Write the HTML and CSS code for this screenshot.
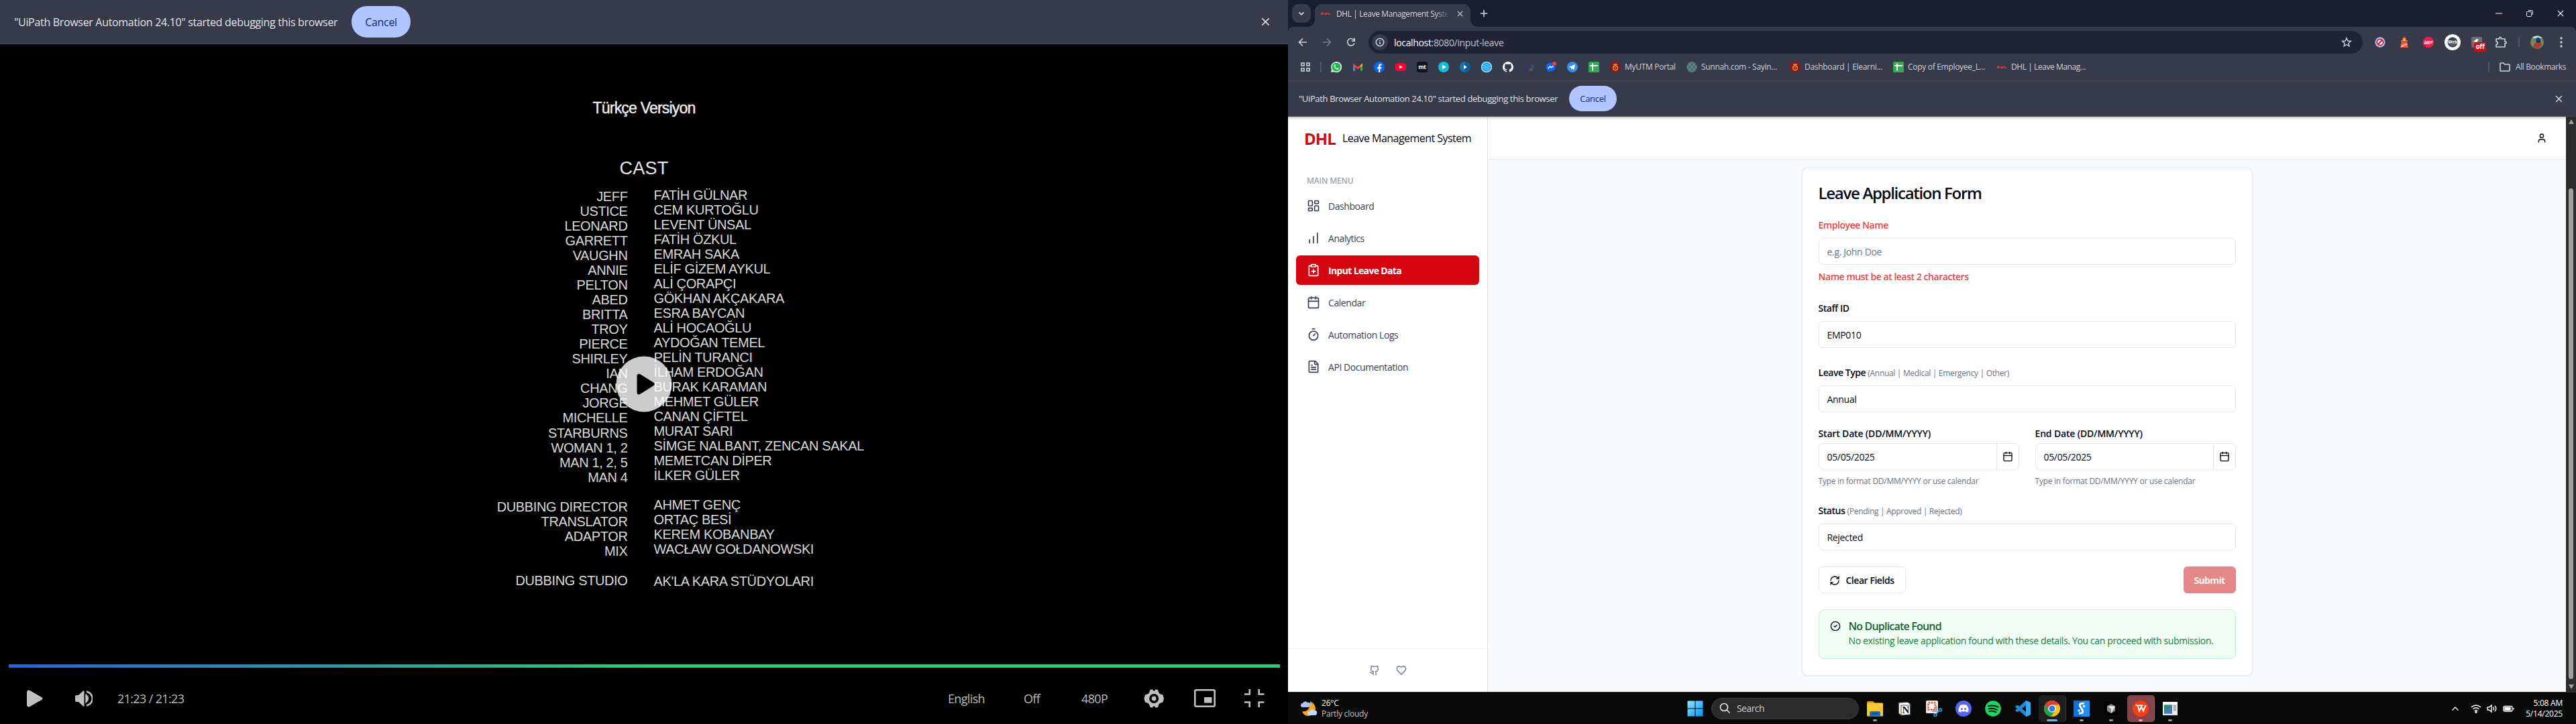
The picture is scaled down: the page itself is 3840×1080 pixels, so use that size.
FILE: index.html
```html
<!DOCTYPE html>
<html lang="en">
<head>
<meta charset="utf-8">
<title>DHL | Leave Management System</title>
<link rel="stylesheet" href="styles.css">
</head>
<body>
<svg width="0" height="0" class="defs">
  <symbol id="x" viewBox="0 0 12 12"><path d="M1.2 1.2l9.6 9.6M10.8 1.2l-9.6 9.6"/></symbol>
  <symbol id="cal" viewBox="0 0 24 24"><path d="M8 2v4M16 2v4M3 10h18"/><rect x="3" y="4" width="18" height="18" rx="2"/></symbol>
  <symbol id="sheet" viewBox="0 0 16 16"><rect width="16" height="16" rx="1.5" fill="#34a853"/><path d="M6 2.5v11M2 6h12" stroke="#fff" stroke-width="2" fill="none"/></symbol>
  <symbol id="utm" viewBox="0 0 16 16"><circle cx="8" cy="8" r="8" fill="#8c1420"/><circle cx="8" cy="9.3" r="3.4" fill="none" stroke="#e9a41f" stroke-width="1.5"/><path d="M5 4h6" stroke="#e9a41f" stroke-width="1.5"/><circle cx="8" cy="9.3" r="1" fill="#e9a41f"/></symbol>
  <symbol id="dhl" viewBox="0 0 16 16"><path d="M.5 10l1-3.6h3.2q1.4.8.2 2.2-.7 1.4-2.2 1.4zM6 10l1-3.6h1.2L7.8 8h1.5l.4-1.6h1.4L10 10zM11.2 10l1-3.6h1.3l-.7 2.6h2.9l-.3 1z" fill="#e2392f"/></symbol>
</svg>

<div class="desktop">
<section class="player">
  <div class="infobar infobar-lg">
    <span class="info-text">"UiPath Browser Automation 24.10" started debugging this browser</span>
    <button class="pill">Cancel</button>
    <svg class="close" width="13" height="13"><use href="#x"/></svg>
  </div>
  <div class="video">
    <div class="version">Türkçe Versiyon</div>
    <div class="cast-title">CAST</div>
    <div class="credits">
      <div class="roles">JEFF<br>USTICE<br>LEONARD<br>GARRETT<br>VAUGHN<br>ANNIE<br>PELTON<br>ABED<br>BRITTA<br>TROY<br>PIERCE<br>SHIRLEY<br>IAN<br>CHANG<br>JORGE<br>MICHELLE<br>STARBURNS<br>WOMAN 1, 2<br>MAN 1, 2, 5<br>MAN 4<br><br>DUBBING DIRECTOR<br>TRANSLATOR<br>ADAPTOR<br>MIX<br><br>DUBBING STUDIO</div>
      <div class="names">FATİH GÜLNAR<br>CEM KURTOĞLU<br>LEVENT ÜNSAL<br>FATİH ÖZKUL<br>EMRAH SAKA<br>ELİF GİZEM AYKUL<br>ALİ ÇORAPÇI<br>GÖKHAN AKÇAKARA<br>ESRA BAYCAN<br>ALİ HOCAOĞLU<br>AYDOĞAN TEMEL<br>PELİN TURANCI<br>İLHAM ERDOĞAN<br>BURAK KARAMAN<br>MEHMET GÜLER<br>CANAN ÇİFTEL<br>MURAT SARI<br>SİMGE NALBANT, ZENCAN SAKAL<br>MEMETCAN DİPER<br>İLKER GÜLER<br><br>AHMET GENÇ<br>ORTAÇ BESİ<br>KEREM KOBANBAY<br>WACŁAW GOŁDANOWSKI<br><span class="studio">AK'LA KARA STÜDYOLARI</span></div>
    </div>
    <svg class="big-play" viewBox="0 0 84 84"><circle cx="42" cy="42" r="41.5" fill="#fff" fill-opacity=".8"/><path d="M31.5 30q0-4.5 4.5-3l20 12.500q3.500 2.500 0 5L36 57q-4.500 1.500-4.500-3z" fill="#000"/></svg>
  </div>
  <div class="progress"></div>
  <div class="controls">
    <svg class="c-play" width="24" height="26" viewBox="0 0 24 26"><path d="M0 3.500Q.5-.8 4.500 1L22 11q3 2 0 4L4.500 25Q.5 26.800 0 22.500z"/></svg>
    <svg class="c-vol" width="26" height="24" viewBox="0 0 26 24"><path d="M0 9q0-2 2-2h3l7-6.500q1.500-1 1.500 1v21q0 2-1.500 1L5 17H2q-2 0-2-2z"/><path d="M16.500 7.200q5 4.800 0 9.600zM17 1.500c11.500 3.500 11.500 17.500 0 21" fill="none" stroke="#bfbfbf" stroke-width="2.400"/></svg>
    <span class="time">21:23 / 21:23</span>
    <span class="opt lang">English</span><span class="opt sub">Off</span><span class="opt res">480P</span>
    <svg class="c-gear" width="30" height="28" viewBox="0 0 30 28"><path fill-rule="evenodd" d="M9.500 1 13 .3l1.200 2.200h2L17.500.3 21 1l1.500 4.500 1.500 1.500 4.500 1.500L30 14l-1.500 5.500L24 21l-1.500 1.500L21 27l-3.500.7-1.300-2.200h-2L13 27.700 9.500 27 8 22.500 6.500 21 2 19.500.5 14 2 8.500 6.500 7 8 5.500zM15.200 7a7 7 0 100 14 7 7 0 000-14z"/><circle cx="15.200" cy="14" r="3.400"/></svg>
    <svg class="c-pip" width="32" height="27" viewBox="0 0 32 27"><rect x="1.300" y="1.300" width="29.400" height="24.400" rx="2" fill="none" stroke="#bfbfbf" stroke-width="2.600"/><rect x="15" y="12" width="11.500" height="8.500"/></svg>
    <svg class="c-fs" width="30" height="27" viewBox="0 0 30 27"><path d="M0 7.500h7.800V0M29.500 7.500h-7.800V0M0 19.500h7.800V27M29.500 19.500h-7.800V27" fill="none" stroke="#bfbfbf" stroke-width="2.700"/></svg>
  </div>
</section>

<section class="chrome">
  <header class="tabs">
    <div class="tab-search"><svg width="10" height="10" viewBox="0 0 10 10"><path d="M1.500 3.300 5 6.800l3.500-3.500" stroke-width="1.800"/></svg></div>
    <div class="tab">
      <svg class="fill" width="16" height="16"><use href="#dhl"/></svg>
      <span class="tab-title">DHL | Leave Management Syste</span>
      <svg width="9" height="9"><use href="#x"/></svg>
    </div>
    <svg class="plus" width="12" height="12" viewBox="0 0 12 12"><path d="M6 .8v10.400M.8 6h10.400"/></svg>
    <div class="win">
      <svg width="10" height="10" viewBox="0 0 10 10"><path d="M0 5h10" stroke-width="1"/></svg>
      <svg width="10" height="10" viewBox="0 0 10 10"><rect x=".5" y="2.500" width="7" height="7" rx="1" stroke-width="1"/><path d="M3 .5h4.500a2 2 0 012 2V7" stroke-width="1"/></svg>
      <svg width="10" height="10"><use href="#x"/></svg>
    </div>
  </header>
  <nav class="toolbar">
    <svg width="16" height="16" viewBox="0 0 16 16"><path d="M14 8H3M8 2.500 2.500 8 8 13.500"/></svg>
    <svg class="dim" width="16" height="16" viewBox="0 0 16 16"><path d="M2 8h11M8 2.500 13.500 8 8 13.500"/></svg>
    <svg width="16" height="16" viewBox="0 0 16 16"><path d="M13 9.500A5.300 5.300 0 1 1 12.500 5M13.200 1.800v4.400H8.800"/></svg>
    <div class="omnibox">
      <span class="site"><svg width="14" height="14" viewBox="0 0 14 14"><circle cx="7" cy="7" r="5.700"/><path d="M7 6.300v3.800M7 3.800v1.300"/></svg></span>
      <span class="url"><b>localhost</b>:8080/input-leave</span>
      <svg class="star" width="16" height="16" viewBox="0 0 16 16"><path d="M8 1.800 9.800 6l4.500.4-3.400 3 1 4.500L8 11.500l-3.900 2.400 1-4.500-3.400-3L6.200 6z" stroke-width="1.400"/></svg>
    </div>
    <div class="exts">
      <svg class="fill" width="16" height="16" viewBox="0 0 16 16"><circle cx="8" cy="8" r="7.300" fill="#fff" stroke="#4a90f0" stroke-width="1.200"/><circle cx="8" cy="8" r="4.800" fill="none" stroke="#d0142c" stroke-width="2"/><path d="M4.500 11.500l7-7" stroke="#d0142c" stroke-width="2"/></svg>
      <svg class="fill" width="16" height="16" viewBox="0 0 16 16"><path d="M5 2.500 8 0l3 2.500V5h2v2.500H3V5h2zM4 8h8l2 8H2z" fill="#ef5b3c"/><circle cx="8" cy="4.500" r="1.800" fill="#ffd22e"/><path d="M3.500 13l8.500-3.500.5 2L3 15.500z" fill="#ffc1a6"/></svg>
      <svg class="fill" width="16" height="16" viewBox="0 0 16 16"><path d="M4.700 0h6.600L16 4.700v6.600L11.300 16H4.700L0 11.300V4.700z" fill="#ed1e45"/><text x="8" y="10.600" class="abp">ABP</text></svg>
      <svg class="fill" width="24" height="24" viewBox="0 0 24 24"><circle cx="12" cy="12" r="12" fill="#fff"/><circle cx="12" cy="12" r="7.500" fill="#2f4157"/><text x="12" y="13.500" class="abp">Web</text><path d="M8 16h8" stroke="#7d95a8" stroke-width="1"/></svg>
      <span class="ext-off"><svg class="fill" width="16" height="16" viewBox="0 0 16 16"><rect width="16" height="16" rx="2" fill="#6d6d6d"/><path d="M3 7l5-4 3 1-3 4z" fill="#fff"/></svg><em>off</em></span>
      <svg width="18" height="18" viewBox="0 0 18 18"><path d="M2 4h4.500V3a1.500 1.500 0 013 0v1H15v4h.8a1.400 1.400 0 010 2.800H15V16H2v-3.500c3-.3 3-4.300 0-4.600z"/></svg>
      <i class="bar"></i>
      <svg class="fill" width="20" height="20" viewBox="0 0 20 20"><circle cx="10" cy="10" r="10" fill="#6f8a55"/><path d="M2.500 4a10 10 0 0115 0z" fill="#c4d8e6"/><path d="M4.500 18q0-8 7-8 5 0 5.500 5a10 10 0 01-12.500 3z" fill="#b03a3a"/><circle cx="11.500" cy="6.500" r="3.500" fill="#223c78"/><path d="M9 8h6v2.500H9z" fill="#20222c"/></svg>
      <svg class="dots" width="4" height="16" viewBox="0 0 4 16"><circle cx="2" cy="2" r="1.700"/><circle cx="2" cy="8" r="1.700"/><circle cx="2" cy="14" r="1.700"/></svg>
    </div>
  </nav>
  <nav class="bookmarks">
    <svg width="14" height="14" viewBox="0 0 14 14"><path d="M1 1h4v4H1zM9 1h4v4H9zM1 9h4v4H1zM9 9h4v4H9z"/></svg>
    <i class="bar"></i>
    <div class="marks">
      <svg width="16" height="16" viewBox="0 0 16 16"><path d="M0 16l1.200-4A8 8 0 1 1 4 14.900z" fill="#fff"/><circle cx="8" cy="8" r="6.600" fill="#12c143"/><path d="M5.500 4q-1.500 1-1 2.800 1.300 4 5 5 1.700.2 2.300-1.500L9.900 9l-1 1Q7 9.500 6 7.300l.8-1L6.300 4z" fill="#fff"/></svg>
      <svg width="16" height="16" viewBox="0 0 16 16"><path d="M1 14V4l3 2v8z" fill="#4285f4"/><path d="M12 14V6l3-2v10z" fill="#34a853"/><path d="M1 2.500 8 8l7-5.500V6l-7 5.500L1 6z" fill="#ea4335"/><path d="M12 5.500l3-3V6l-3 2.300z" fill="#fbbc04"/></svg>
      <svg width="16" height="16" viewBox="0 0 16 16"><circle cx="8" cy="8" r="8" fill="#0866ff"/><path d="M7 16v-5.500H5V8h2V6.500Q7 3.200 10 3.200h1.500v2.300h-1q-1.300 0-1.300 1.300V8h2.200l-.4 2.500H9.200V16z" fill="#fff"/></svg>
      <svg width="16" height="16" viewBox="0 0 16 16"><rect y="2.300" width="16" height="11.400" rx="3" fill="#ff0033"/><path d="M6.300 5.500v5L10.800 8z" fill="#fff"/></svg>
      <svg width="16" height="16" viewBox="0 0 16 16"><rect width="16" height="16" rx="2.500" fill="#10131c"/><text x="8" y="11" class="mt">mt</text></svg>
      <svg width="16" height="16" viewBox="0 0 16 16"><circle cx="8" cy="8" r="8" fill="#0cc0d8"/><path d="M6 4.500v7L12 8z" fill="#fff"/></svg>
      <svg width="16" height="16" viewBox="0 0 16 16"><circle cx="8" cy="8" r="8" fill="#0b5c95"/><path d="M8 0a8 8 0 000 16z" fill="#1078a8"/><path d="M6 5v6l5-3z" fill="#fff"/></svg>
      <svg width="16" height="16" viewBox="0 0 16 16"><circle cx="8" cy="8" r="7.500" fill="#19a4f5" stroke="#9cdcfa"/><path d="M3 5l10 6M2.500 8l9 5.500M6 3l7.500 4.500" stroke="#7ccbf7" stroke-width="1.200"/></svg>
      <svg width="16" height="16" viewBox="0 0 16 16"><path d="M8 0a8 8 0 00-2.500 15.600c.4 0 .5-.2.500-.4v-1.500c-2.200.5-2.700-1-2.700-1-.4-.9-.9-1.100-.9-1.100-.7-.5 0-.5 0-.5.800 0 1.200.8 1.200.8.700 1.300 1.900.9 2.400.7 0-.5.200-.9.500-1.100-1.800-.2-3.600-.9-3.600-4 0-.8.300-1.500.8-2.100 0-.2-.4-1 .1-2.100 0 0 .7-.2 2.200.8a7.600 7.600 0 014 0c1.500-1 2.200-.8 2.200-.8.400 1.100.1 1.900.1 2.100.5.600.8 1.300.8 2.100 0 3.100-1.900 3.800-3.700 4 .3.300.6.800.6 1.500v2.200c0 .2.100.4.500.4A8 8 0 008 0z" fill="#fff"/></svg>
      <svg width="16" height="16" viewBox="0 0 16 16"><path d="M6 2h4L5 14H0z" fill="#3a3068"/><path d="M9 2l6 4v5l-4-2z" fill="#36506a"/><path d="M9 9l5 2-2 3H7z" fill="#55564a"/></svg>
      <svg width="16" height="16" viewBox="0 0 16 16"><path d="M7.500 1.500C3 1.500.5 4.500.5 8c0 2.200 1 4 2.500 5v2.500l2.300-1.200c4.700 1.200 9.200-1.800 9.200-6.300 0-3.500-2.500-6.500-7-6.500z" fill="#0866ff"/><path d="M3.500 10.500 6.500 7l2 1.700 3-2.200" stroke="#fff" stroke-width="1.500" fill="none"/><circle cx="13" cy="3" r="3" fill="#f0402f"/></svg>
      <svg width="16" height="16" viewBox="0 0 16 16"><circle cx="8" cy="8" r="8" fill="#3390ec"/><path d="M2.800 8l9.200-4-1.600 8.300-3-2-1.300 1.300L5.800 9z" fill="#fff"/></svg>
      <svg width="16" height="16"><use href="#sheet"/></svg>
    </div>
    <span class="bm b1"><svg width="16" height="16"><use href="#utm"/></svg>MyUTM Portal</span>
    <span class="bm b2"><svg width="16" height="16" viewBox="0 0 16 16"><circle cx="8" cy="8" r="8" fill="#49696e"/><path d="M3 2l10 12M8 0l7 9M1 7l7 9M13 2L3 14M8 0L1 9M15 7l-7 9" stroke="#72979a" stroke-width="1" fill="none"/></svg>Sunnah.com - Sayin...</span>
    <span class="bm b3"><svg width="16" height="16"><use href="#utm"/></svg>Dashboard | Elearni...</span>
    <span class="bm b4"><svg width="16" height="16"><use href="#sheet"/></svg>Copy of Employee_L...</span>
    <span class="bm b5"><svg width="16" height="16"><use href="#dhl"/></svg>DHL | Leave Manag...</span>
    <div class="all"><i class="bar"></i><svg width="16" height="14" viewBox="0 0 16 14"><path d="M1 2.200Q1 1 2.200 1h3.600l1.700 2h6.300q1.200 0 1.200 1.200v7.600q0 1.200-1.200 1.200H2.200Q1 13 1 11.800z"/></svg>All Bookmarks</div>
  </nav>
  <div class="infobar">
    <span class="info-text">"UiPath Browser Automation 24.10" started debugging this browser</span>
    <button class="pill">Cancel</button>
    <svg class="close" width="11" height="11"><use href="#x"/></svg>
  </div>

  <div class="page">
    <aside class="sidebar">
      <div class="brand"><strong>DHL</strong><span>Leave Management System</span></div>
      <div class="menu-label">MAIN MENU</div>
      <nav class="menu">
        <a><svg class="l" viewBox="0 0 24 24"><rect x="3" y="3" width="7" height="9" rx="1"/><rect x="14" y="3" width="7" height="5" rx="1"/><rect x="14" y="12" width="7" height="9" rx="1"/><rect x="3" y="16" width="7" height="5" rx="1"/></svg>Dashboard</a>
        <a><svg class="l" viewBox="0 0 24 24"><path d="M5 21v-6M12 21V9M19 21V3"/></svg>Analytics</a>
        <a class="active"><svg class="l" viewBox="0 0 24 24"><rect x="8" y="2" width="8" height="4" rx="1"/><path d="M16 4h2a2 2 0 012 2v14a2 2 0 01-2 2H6a2 2 0 01-2-2V6a2 2 0 012-2h2M9 14h6M12 17v-6"/></svg>Input Leave Data</a>
        <a><svg class="l"><use href="#cal"/></svg>Calendar</a>
        <a><svg class="l" viewBox="0 0 24 24"><path d="M10 2h4M12 14l3-3"/><circle cx="12" cy="14" r="8"/></svg>Automation Logs</a>
        <a><svg class="l" viewBox="0 0 24 24"><path d="M15 2H6a2 2 0 00-2 2v16a2 2 0 002 2h12a2 2 0 002-2V7zM14 2v4a2 2 0 002 2h4M10 9H8M16 13H8M16 17H8"/></svg>API Documentation</a>
      </nav>
      <div class="side-foot">
        <svg class="l" viewBox="0 0 24 24"><path d="M15 22v-4a4.800 4.800 0 00-1-3.500c3 0 6-2 6-5.500.08-1.250-.27-2.480-1-3.500.28-1.150.28-2.350 0-3.500 0 0-1 0-3 1.500-2.640-.5-5.360-.5-8 0C6 2 5 2 5 2c-.3 1.150-.3 2.350 0 3.500A5.400 5.400 0 004 9c0 3.500 3 5.500 6 5.500-.39.490-.68 1.050-.85 1.650-.17.6-.22 1.230-.15 1.850v4M9 18c-4.510 2-5-2-7-2"/></svg>
        <svg class="l" viewBox="0 0 24 24"><path d="M19 14c1.490-1.460 3-3.210 3-5.500A5.500 5.500 0 0016.500 3c-1.760 0-3 .5-4.500 2-1.500-1.500-2.740-2-4.500-2A5.500 5.500 0 002 8.500c0 2.300 1.500 4.050 3 5.500l7 7z"/></svg>
      </div>
    </aside>
    <main class="main">
      <div class="topbar"><svg class="l" viewBox="0 0 24 24"><path d="M19 21v-2a4 4 0 00-4-4H9a4 4 0 00-4 4v2"/><circle cx="12" cy="7" r="4"/></svg></div>
      <form class="card">
        <h1>Leave Application Form</h1>
        <div class="field error"><label>Employee Name</label><div class="input placeholder">e.g. John Doe</div><p>Name must be at least 2 characters</p></div>
        <div class="field"><label>Staff ID</label><div class="input">EMP010</div></div>
        <div class="field"><label>Leave Type <small>(Annual | Medical | Emergency | Other)</small></label><div class="input">Annual</div></div>
        <div class="dates">
          <div class="date"><label>Start Date (DD/MM/YYYY)</label><div class="input"><span>05/05/2025</span><i><svg class="l"><use href="#cal"/></svg></i></div><p>Type in format DD/MM/YYYY or use calendar</p></div>
          <div class="date"><label>End Date (DD/MM/YYYY)</label><div class="input"><span>05/05/2025</span><i><svg class="l"><use href="#cal"/></svg></i></div><p>Type in format DD/MM/YYYY or use calendar</p></div>
        </div>
        <div class="field"><label>Status <small>(Pending | Approved | Rejected)</small></label><div class="input">Rejected</div></div>
        <div class="actions">
          <button type="button" class="btn"><svg class="l" viewBox="0 0 24 24"><path d="M3 12a9 9 0 019-9 9.750 9.750 0 016.740 2.740L21 8M21 3v5h-5M21 12a9 9 0 01-9 9 9.750 9.750 0 01-6.740-2.740L3 16M8 16H3v5"/></svg>Clear Fields</button>
          <button type="button" class="btn submit">Submit</button>
        </div>
        <div class="alert">
          <svg class="l" viewBox="0 0 24 24"><circle cx="12" cy="12" r="10"/><path d="M9 12l2 2 4-4"/></svg>
          <div><h2>No Duplicate Found</h2><p>No existing leave application found with these details. You can proceed with submission.</p></div>
        </div>
      </form>
    </main>
    <div class="scroll"><b class="up"></b><b class="thumb"></b><b class="down"></b></div>
  </div>

  <footer class="taskbar">
    <div class="weather">
      <svg width="25" height="24" viewBox="0 0 25 24"><path d="M14 1q9 5 8 13-3 9-12 9-6-1-8-7 12 2 12-15z" fill="#f5a623"/><path d="M3 10a3 3 0 010-6 4 4 0 017-1 3 3 0 014 4q0 3-3 3z" fill="#a9c6f7"/><path d="M13 22a3 3 0 010-6 4 4 0 017-1 3 3 0 014 4q0 3-3 3z" fill="#c3d8fb"/></svg>
      <div><span>26°C</span><em>Partly cloudy</em></div>
    </div>
    <div class="slot"><svg width="24" height="24" viewBox="0 0 24 24"><defs><linearGradient id="w" x2="1" y2="1"><stop stop-color="#8be4ff"/><stop offset="1" stop-color="#0a93f5"/></linearGradient></defs><path d="M.5.5h11v11H.5zM12.500.5h11v11h-11zM.5 12.500h11v11H.5zM12.500 12.500h11v11h-11z" fill="url(#w)"/></svg></div>
    <div class="search"><svg width="17" height="17" viewBox="0 0 17 17"><circle cx="7" cy="7" r="5.500"/><path d="M11 11l4.500 4.500"/></svg>Search</div>
    <div class="slot run"><svg width="24" height="24" viewBox="0 0 24 24"><path d="M0 3q0-2 2-2h7l3 3H0z" fill="#d99510"/><rect y="3.500" width="24" height="20" rx="1.500" fill="#fcc936"/><path d="M4 23.500V18q0-2 2-2h12q2 0 2 2v5.500z" fill="#1373c8"/><path d="M7 19.500h10" stroke="#0b4e94" stroke-width="2"/></svg></div>
    <div class="slot"><svg width="24" height="24" viewBox="0 0 24 24"><path d="M3 3l14-1 4 3v16l-14 1.500L3 19z" fill="#fff" stroke="#2b2b2b"/><path d="M7 7h13.500v14L7 22z" fill="#fff" stroke="#222" stroke-width=".8"/><text x="13.700" y="19" class="notion">N</text></svg></div>
    <div class="slot"><svg width="24" height="24" viewBox="0 0 24 24"><rect width="18" height="19" rx="1.500" fill="#e9e9ec"/><rect x="3.500" y="3.500" width="10" height="10" fill="#fff" stroke="#d83b01" stroke-width="2" stroke-dasharray="2.500 1.500"/><path d="M14 8h3v9h-8v-3h5z" fill="#a4a7ad"/><circle cx="14" cy="21.500" r="2" fill="none" stroke="#2aa4e8" stroke-width="1.500"/><circle cx="21.500" cy="14" r="2" fill="none" stroke="#2aa4e8" stroke-width="1.500"/><path d="M15 20l5-5" stroke="#2aa4e8" stroke-width="1.500"/></svg></div>
    <div class="slot"><svg width="24" height="24" viewBox="0 0 24 24"><circle cx="12" cy="12" r="12" fill="#5865f2"/><path d="M7 7q5-2 10 0 3 4.500 2.500 9-2 1.500-3.500 1.500l-1-1.500q-3 .8-6 0l-1 1.500q-1.500 0-3.500-1.500Q4 11.500 7 7z" fill="#fff"/><circle cx="9.500" cy="12.500" r="1.600" fill="#5865f2"/><circle cx="14.500" cy="12.500" r="1.600" fill="#5865f2"/></svg></div>
    <div class="slot"><svg width="24" height="24" viewBox="0 0 24 24"><circle cx="12" cy="12" r="11.800" fill="#1ed760"/><path d="M5 8.200q7.500-2 14.500 1.500M5.700 12.300q6.300-1.600 12.300 1.500M6.500 16q5-1.200 10 1.300" stroke="#06140a" stroke-width="2" fill="none" stroke-linecap="round"/></svg></div>
    <div class="slot"><svg width="24" height="24" viewBox="0 0 24 24"><path d="M17 0l7 3v18l-7 3L1 9.500 3 7l3 .5 11 9.500V7L6 16.500l-3 .5-2-2.500z" fill="#1e8ad6"/><path d="M17 0l7 3v18l-7 3z" fill="#35a9f5"/></svg></div>
    <div class="slot run on"><svg width="24" height="24" viewBox="0 0 24 24"><circle cx="12" cy="12" r="12" fill="#fbc116"/><path d="M1.600 6A12 12 0 0122.400 6H12L7 15z" fill="#e33b2e"/><path d="M1.600 6A12 12 0 0010.500 24L16 15H7z" fill="#20a148"/><circle cx="12" cy="12" r="5.800" fill="#fff"/><circle cx="12" cy="12" r="4.500" fill="#2f7cf0"/></svg></div>
    <div class="slot run"><svg width="24" height="24" viewBox="0 0 24 24"><rect width="24" height="24" fill="#0a73dc"/><path d="M14 0h10v24H12z" fill="#2090f5"/><path d="M15.500 4.500q-7-1-6 3.500l4 7q1 4.500-5.500 4" stroke="#fff" stroke-width="3" fill="none"/><circle cx="15.500" cy="8.500" r="1.800" fill="#fff"/><circle cx="8" cy="15" r="1.800" fill="#fff"/></svg></div>
    <div class="slot run"><svg width="20" height="20" viewBox="0 0 20 20"><rect width="20" height="20" rx="4" fill="#000"/><path d="M10 3l6 3.500v7L10 17l-6-3.500v-7z" fill="#8a8a8a"/><path d="M4 6.500h12L10 17v-7z" fill="#eee"/></svg></div>
    <div class="slot run wps"><svg width="24" height="24" viewBox="0 0 24 24"><circle cx="12" cy="12" r="12" fill="#fa3c14"/><path d="M4.500 7h3l2.500 8.500L13 9l3 6.500L19.500 7M9 7h6.500" stroke="#fff" stroke-width="2" fill="none"/></svg></div>
    <div class="slot run"><svg width="22" height="20" viewBox="0 0 22 20"><rect width="22" height="20" fill="#e8eaec"/><path d="M0 0h22v3H0z" fill="#fff"/><rect x="2" y="4.500" width="12" height="13" fill="#2e8a78"/><path d="M2 17.500l12-13V17.500z" fill="#4a78c8"/><path d="M16 6h4M16 9h4M16 12h4" stroke="#7b838a"/></svg></div>
    <div class="tray">
      <svg width="12" height="8" viewBox="0 0 12 8"><path d="M1.500 6.500 6 2l4.500 4.500"/></svg>
      <div class="net">
      <svg width="16" height="14" viewBox="0 0 16 14"><path d="M1 5q7-6 14 0M3.500 7.800q4.500-4 9 0M6 10.500q2-1.800 4 0"/><circle cx="8" cy="12.300" r="1" fill="#fff"/></svg>
      <svg width="16" height="14" viewBox="0 0 16 14"><path d="M1 5h2.500L7 2v10L3.500 9H1zM9.500 4.800q2 2.200 0 4.400M11.800 2.800q4 4.200 0 8.400"/></svg>
      <svg width="18" height="14" viewBox="0 0 18 14"><rect x="1" y="3.500" width="13" height="7.500" rx="2"/><path d="M3 5.500h8v3.500H3z" fill="#fff"/><path d="M16 6v2.500"/></svg>
      </div>
      <div class="clock">5:08 AM<br>5/14/2025</div>
    </div>
  </footer>
</section>
</div>
</body>
</html>
```
FILE: styles.css
```css
* { box-sizing: border-box; }
body, p, h1, h2 { margin: 0; }
body {
  background: #000;
  font-family: "Open Sans", "Noto Sans", sans-serif;
  overflow: hidden;
}
button { font-family: inherit; }
.defs { position: absolute; }
svg { flex: none; display: block; }
i, em { font-style: normal; }
.desktop { display: flex; width: 3840px; height: 1080px; }

/* debugging infobar */
.infobar {
  display: flex;
  align-items: center;
  height: 53px;
  padding: 0 20px 0 16px;
  background: #363a4b;
  border-bottom: 1px solid #4b4450;
  color: #e3e3e8;
  font-size: 13px;
  letter-spacing: -.35px;
}
.info-text { width: 403px; white-space: nowrap; }
.pill {
  width: 71px;
  height: 38px;
  padding: 0;
  border: 0;
  border-radius: 19px;
  background: #b1c5ff;
  color: #0c2c6c;
  font-size: 13px;
  font-weight: 500;
  letter-spacing: -.3px;
}
.close { margin-left: auto; stroke: #d5d7e0; stroke-width: 1.6; }
.infobar-lg { height: 66px; padding: 0 27px 0 21px; font-size: 16px; letter-spacing: -.32px; border-color: #48494e; }
.infobar-lg .info-text { width: 503px; }
.infobar-lg .pill { width: 88px; height: 47px; border-radius: 23px; font-size: 16px; }

/* video player */
.player { width: 1920px; display: flex; flex-direction: column; background: #000; }
.video {
  position: relative;
  height: 925px;
  padding-top: 80px;
  color: #d9d9d9;
  font-family: "Liberation Sans", Arial, sans-serif;
  text-align: center;
}
.version { font-size: 23px; line-height: 30px; letter-spacing: -.8px; color: #f0f0f0; -webkit-text-stroke: .4px #f0f0f0; }
.cast-title { margin-top: 60px; font-size: 27px; line-height: 30px; letter-spacing: .3px; color: #e8e8e8; }
.credits { display: flex; justify-content: center; margin-top: 6px; font-size: 20px; line-height: 22.03px; letter-spacing: -.37px; text-align: left; white-space: nowrap; }
.roles { width: 480px; padding-top: 10px; text-align: right; margin-right: 39px; margin-left: -10px; }
.names { width: 480px; padding-top: 7.5px; }
.studio { display: block; margin-top: 26px; }
.big-play { position: absolute; left: 918px; top: 465px; width: 84px; height: 84px; }
.progress { height: 5px; margin: 0 12px 0 13px; background: linear-gradient(90deg, #2064f0, #1ed670 50%); }
.controls { display: flex; align-items: center; height: 84px; padding: 7px 35px 0 40px; color: #bdbdbd; fill: #bfbfbf; font-size: 18px; letter-spacing: -.65px; }
.c-vol { margin-left: 48px; }
.time { width: 110px; margin-left: 37px; }
.opt { white-space: nowrap; }
.lang { margin-left: auto; width: 113px; }
.sub { width: 86px; }
.res { width: 93px; }
.c-pip { margin-left: 45px; }
.c-fs { margin-left: 43px; }

/* browser window */
.chrome { width: 1920px; display: flex; flex-direction: column; background: #1a1e2f; color: #d8dae6; fill: none; stroke: #d0d3e2; }
.chrome svg { stroke-width: 1.6; }
.tabs { display: flex; align-items: center; height: 40px; padding-left: 6px; }
.tab-search { display: flex; align-items: center; justify-content: center; width: 28px; height: 28px; border-radius: 9px; background: #363a4b; }
.tab { position: relative; display: flex; align-items: center; align-self: flex-end; width: 232px; height: 34px; margin-left: 6px; padding: 0 12px 6px 8px; border-radius: 10px 10px 0 0; background: #363a4b; font-size: 12px; letter-spacing: -.4px; }
.tab::before, .tab::after { content: ""; position: absolute; bottom: 0; width: 10px; height: 10px; }
.tab::before { left: -10px; background: radial-gradient(circle at 0 0, transparent 9.5px, #363a4b 10px); }
.tab::after { right: -10px; background: radial-gradient(circle at 100% 0, transparent 9.5px, #363a4b 10px); }
.tab-title { width: 168px; margin: 0 12px 0 8px; white-space: nowrap; -webkit-mask: linear-gradient(90deg, #000 85%, transparent); mask: linear-gradient(90deg, #000 88%, transparent); }
.fill { stroke: none; }
.plus { margin-left: 14px; }
.win { display: flex; gap: 36px; margin-left: auto; padding-right: 18px; stroke: #fff; }
.win svg:last-child { stroke-width: 1.3; }
.toolbar { display: flex; align-items: center; gap: 20px; height: 45px; padding: 1px 20px 0 14px; border-radius: 8px 8px 0 0; background: #363a4b; }
.dim { opacity: .45; }
.omnibox { display: flex; align-items: center; width: 1482px; height: 34px; margin-left: -2px; padding: 0 16px 0 5px; border-radius: 17px; background: #1f2335; }
.site { display: flex; align-items: center; justify-content: center; width: 24px; height: 24px; border-radius: 12px; background: #363a4b; }
.url { margin-left: 9px; font-size: 14px; letter-spacing: -.34px; color: #bfc2d2; }
.url b { font-weight: 400; color: #fff; }
.star { margin-left: auto; }
.exts { display: flex; align-items: center; flex: 1; }
.exts > :nth-child(1) { margin-right: 20px; margin-left: -2px; }
.exts > :nth-child(2) { margin-right: 20px; }
.exts > :nth-child(3) { margin-right: 16px; }
.exts > :nth-child(4) { margin-right: 16px; }
.abp { font: 700 6.500px "Open Sans", sans-serif; text-anchor: middle; fill: #fff; }
.ext-off { position: relative; margin-right: 19px; }
.ext-off em { position: absolute; left: 4px; top: 8px; width: 18px; height: 14px; border-radius: 4px; background: #cc0c18; color: #fff; font-size: 10px; font-weight: 700; line-height: 13px; text-align: center; letter-spacing: -.3px; }
.bar { display: block; width: 2px; height: 16px; border-radius: 1px; background: #50556b; }
.exts .bar { margin: 0 16px 0 17px; }
.dots { margin-left: auto; fill: #d0d3e2; stroke: none; }
.bookmarks { display: flex; align-items: center; height: 36px; padding: 0 15px 6px 19px; background: #363a4b; border-bottom: 1px solid #48494e; font-size: 12px; letter-spacing: -.3px; color: #cfd1da; }
.bookmarks > .bar { margin: 0 14px 0 15px; }
.marks { display: flex; gap: 16px; stroke: none; }
.mt { font: 700 8.500px "Open Sans", sans-serif; text-anchor: middle; fill: #fff; }
.bm { display: flex; align-items: center; gap: 6px; margin-left: 16px; white-space: nowrap; }
.bm svg { stroke: none; }
.b1 { width: 98px; } .b2 { width: 138px; } .b3 { width: 138px; } .b4 { width: 138px; }
.b5 { letter-spacing: -.43px; }
.all { display: flex; align-items: center; margin-left: auto; gap: 8px; letter-spacing: -.38px; }
.all .bar { margin-right: 7px; }

/* leave management app */
.page { position: relative; display: flex; height: 858px; background: #f8fafc; color: #020817; stroke: currentColor; overflow: hidden; }
.page::before { content: ""; position: absolute; top: 0; left: 0; right: 15px; height: 5px; background: linear-gradient(rgba(0, 0, 0, .22), transparent); }
.chrome .l { width: 16px; height: 16px; stroke: currentColor; fill: none; stroke-width: 2; stroke-linecap: round; stroke-linejoin: round; }
.sidebar { display: flex; flex-direction: column; width: 298px; background: #fff; border-right: 1px solid #e2e5ea; }
.brand { display: flex; align-items: center; height: 64px; padding-left: 24px; }
.brand strong { width: 57px; font-size: 24px; letter-spacing: -1px; color: #d40511; }
.brand span { font-size: 16px; letter-spacing: -.54px; white-space: nowrap; }
.menu-label { margin: 23px 0 8px 28px; font-size: 12px; line-height: 17px; height: 16px; font-weight: 600; letter-spacing: -.2px; color: #9ca3af; }
.menu { display: flex; flex-direction: column; gap: 4px; padding: 0 12px; }
.menu a { display: flex; align-items: center; gap: 12px; height: 44px; padding-left: 16px; border-radius: 6px; font-size: 14px; letter-spacing: -.43px; color: #374151; }
.chrome .menu .l { width: 20px; height: 20px; }
.menu .active { background: #d40511; color: #fff; font-weight: 700; letter-spacing: -.65px; }
.side-foot { display: flex; justify-content: center; gap: 24px; height: 65px; margin-top: auto; padding-top: 24px; border-top: 1px solid #f0f1f4; color: #6b7280; }
.main { flex: 1; display: flex; flex-direction: column; align-items: center; }
.topbar { display: flex; align-items: center; justify-content: flex-end; width: 100%; height: 64px; padding-right: 28px; background: #fff; border-bottom: 1px solid #e2e8f0; }
.card { width: 672px; height: 758px; margin-top: 12px; padding: 24px; background: #fff; border: 1px solid #e2e8f0; border-radius: 8px; box-shadow: 0 1px 2px rgba(0, 0, 0, .05); display: flex; flex-direction: column; gap: 24px; font-size: 14px; }
h1 { height: 24px; font-size: 24px; line-height: 26px; font-weight: 600; letter-spacing: -1.3px; }
label { display: block; height: 24px; margin-bottom: 8px; line-height: 25px; font-weight: 600; letter-spacing: -.45px; white-space: nowrap; }
label small { font-size: 12px; font-weight: 500; color: #6b7280; letter-spacing: -.32px; }
.input { display: flex; align-items: center; height: 40px; padding: 1px 12px 0; border: 1px solid #e2e8f0; border-radius: 6px; letter-spacing: -.33px; }
.placeholder { color: #64748b; }
.field p { margin-top: 8px; line-height: 20px; font-weight: 600; letter-spacing: -.45px; }
.error label, .error p { color: #ef4444; }
.dates { display: grid; grid-template-columns: 1fr 1fr; gap: 24px; }
.date label { height: 14px; line-height: 15px; letter-spacing: -.17px; }
.date .input { padding: 0 0 0 12px; }
.date .input span { flex: 1; padding-top: 1px; }
.date i { display: flex; align-items: center; justify-content: center; width: 33px; height: 38px; border-left: 1px solid #e2e8f0; }
.date p { margin-top: 8px; font-size: 12px; line-height: 17px; height: 16px; letter-spacing: -.25px; color: #64748b; }
.actions { display: flex; justify-content: space-between; }
.btn { display: flex; align-items: center; justify-content: center; gap: 8px; width: 130px; height: 40px; padding: 1px 0 0; border: 1px solid #e2e8f0; border-radius: 6px; background: #fff; color: #020817; font-size: 14px; font-weight: 600; letter-spacing: -.45px; }
.submit { width: 78px; border: 0; background: #e38787; color: #fdf4f4; font-weight: 700; letter-spacing: -.64px; }
.alert { display: flex; gap: 12px; height: 74px; padding: 16px; border: 1px solid #bbf7d0; border-radius: 8px; background: #f0fdf4; }
.alert h2 { margin-bottom: 4px; font-size: 16px; line-height: 17px; height: 16px; font-weight: 600; letter-spacing: -.8px; color: #166534; }
.alert p { line-height: 20px; letter-spacing: -.36px; color: #15803d; white-space: nowrap; }
.scroll { display: flex; flex-direction: column; align-items: center; width: 15px; padding: 4px 0; background: #2c2c2c; }
.up, .down { border: 4.500px solid transparent; border-top: 0; border-bottom: 7px solid #9f9f9f; }
.down { border-bottom: 0; border-top: 7px solid #9f9f9f; margin-top: auto; }
.thumb { width: 7px; height: 732px; margin-top: 96px; border-radius: 4px; background: #9f9f9f; }

/* taskbar */
.taskbar { display: flex; align-items: center; height: 48px; background: #090909; border-top: 1px solid #303030; color: #fff; font-size: 12px; letter-spacing: -.23px; stroke: none; }
.weather { display: flex; align-items: center; gap: 6px; width: 585px; padding-left: 19px; }
.weather span, .weather em { display: block; line-height: 16px; }
.weather em { color: #c0c0c0; }
.slot { position: relative; display: flex; align-items: center; justify-content: center; width: 44px; height: 40px; }
.run::after { content: ""; position: absolute; left: 19px; bottom: 1px; width: 6px; height: 3px; border-radius: 2px; background: #9a9a9a; }
.slot svg { position: relative; }
.on::before, .wps::before { content: ""; position: absolute; left: 2px; top: 0; width: 40px; height: 40px; border-radius: 5px; background: #1e1e1e; border-right: 1px solid #3a3a3a; }
.on::after { left: 14px; width: 16px; background: #4cc2ff; }
.wps::before { background: #84444a; border-color: #a86068; }
.wps::after { background: #ff99a4; }
.notion { font: 700 15px "Liberation Serif", serif; text-anchor: middle; fill: #111; }
.search { display: flex; align-items: center; gap: 9px; width: 220px; height: 32px; margin: 0 2px; padding-left: 11px; border: 1px solid #3d3d3d; border-radius: 16px; background: #2b2b2b; color: #d0d0d0; font-size: 14px; letter-spacing: -.56px; stroke: #e8e8e8; }
.tray { display: flex; align-items: center; margin-left: auto; padding-right: 20px; stroke: #fff; }
.chrome .tray svg { stroke-width: 1.4; }
.net { display: flex; gap: 8px; margin: 0 13px 0 17px; }
.clock { width: 58px; text-align: right; line-height: 16px; stroke: none; white-space: nowrap; }
```
